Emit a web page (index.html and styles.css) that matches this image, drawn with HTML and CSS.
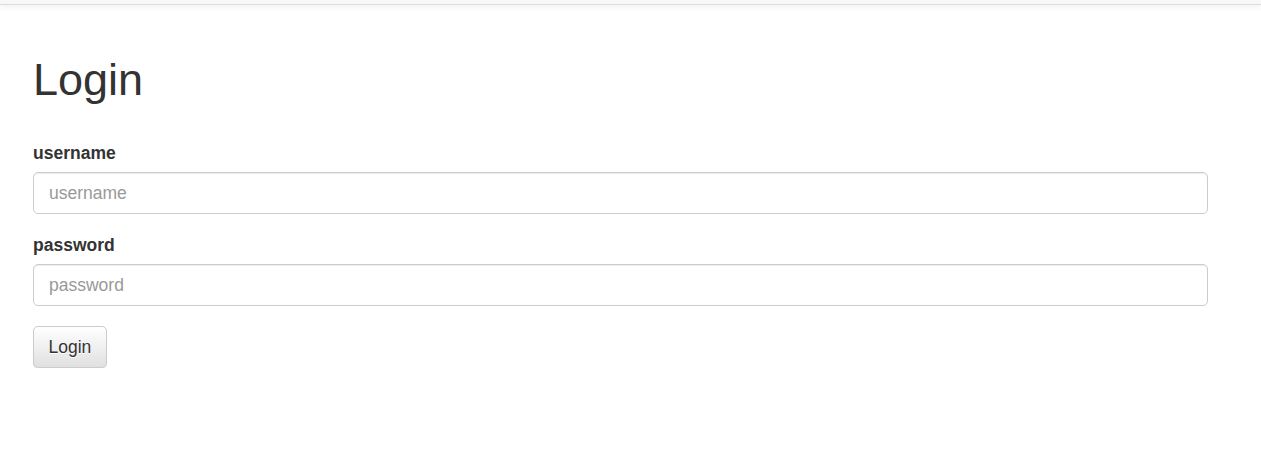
FILE: index.html
```html
<!DOCTYPE html>
<html>
<head>
	<title>Login</title>
	<link rel="stylesheet" href="styles.css">
</head>
<body>
	<div class="navbar"></div>

	<div class="container">
		<h1 class="title">Login</h1>
		<form class="login-form" onsubmit="return false">
			<div class="form-group">
				<label for="username">username</label>
				<input type="text" id="username" class="form-control" placeholder="username">
			</div>
			<div class="form-group">
				<label for="password">password</label>
				<input type="password" id="password" class="form-control" placeholder="password">
			</div>
			<button type="submit" class="btn">Login</button>
		</form>
	</div>
</body>
</html>
```

FILE: styles.css
```css
body{
	margin: 0;
	font-family: "Liberation Sans", Arial, Helvetica, sans-serif;
	font-size: 17.5px;
	line-height: 25px;
	color: #333;
	background-color: #fff;
}
.navbar{
	height: 4px;
	background-color: #f8f8f8;
	border-bottom: 1px solid #dcdcdc;
	box-shadow: 0 1px 7px rgba(0, 0, 0, 0.09);
}
.container{
	padding: 50px 53px 0 33px;
}
.title{
	margin: 0 0 36px 0;
	font-size: 45px;
	font-weight: 500;
	line-height: 49.5px;
	color: #333;
}
.form-group{
	margin-bottom: 19px;
}
label{
	display: block;
	margin-bottom: 6px;
	font-weight: bold;
}
.form-control{
	display: block;
	box-sizing: border-box;
	width: 100%;
	height: 42px;
	padding: 8px 15px 6px 15px;
	font-family: inherit;
	font-size: 17.5px;
	line-height: 25px;
	color: #555;
	background-color: #fff;
	border: 1px solid #ccc;
	border-radius: 5px;
	box-shadow: inset 0 1px 1px rgba(0, 0, 0, 0.075);
	outline: none;
}
.form-control::placeholder{
	color: #999;
}
.btn{
	display: inline-block;
	box-sizing: border-box;
	height: 42px;
	margin-top: 1px;
	padding: 8px 14.5px 6px 14.5px;
	font-family: inherit;
	font-size: 17.5px;
	line-height: 25px;
	color: #333;
	text-shadow: 0 1px 0 #fff;
	background-image: linear-gradient(to bottom, #fff 0%, #e0e0e0 100%);
	border: 1px solid #ccc;
	border-radius: 5px;
	box-shadow: inset 0 1px 0 rgba(255, 255, 255, 0.15), 0 1px 1px rgba(0, 0, 0, 0.075);
	cursor: pointer;
}
```
